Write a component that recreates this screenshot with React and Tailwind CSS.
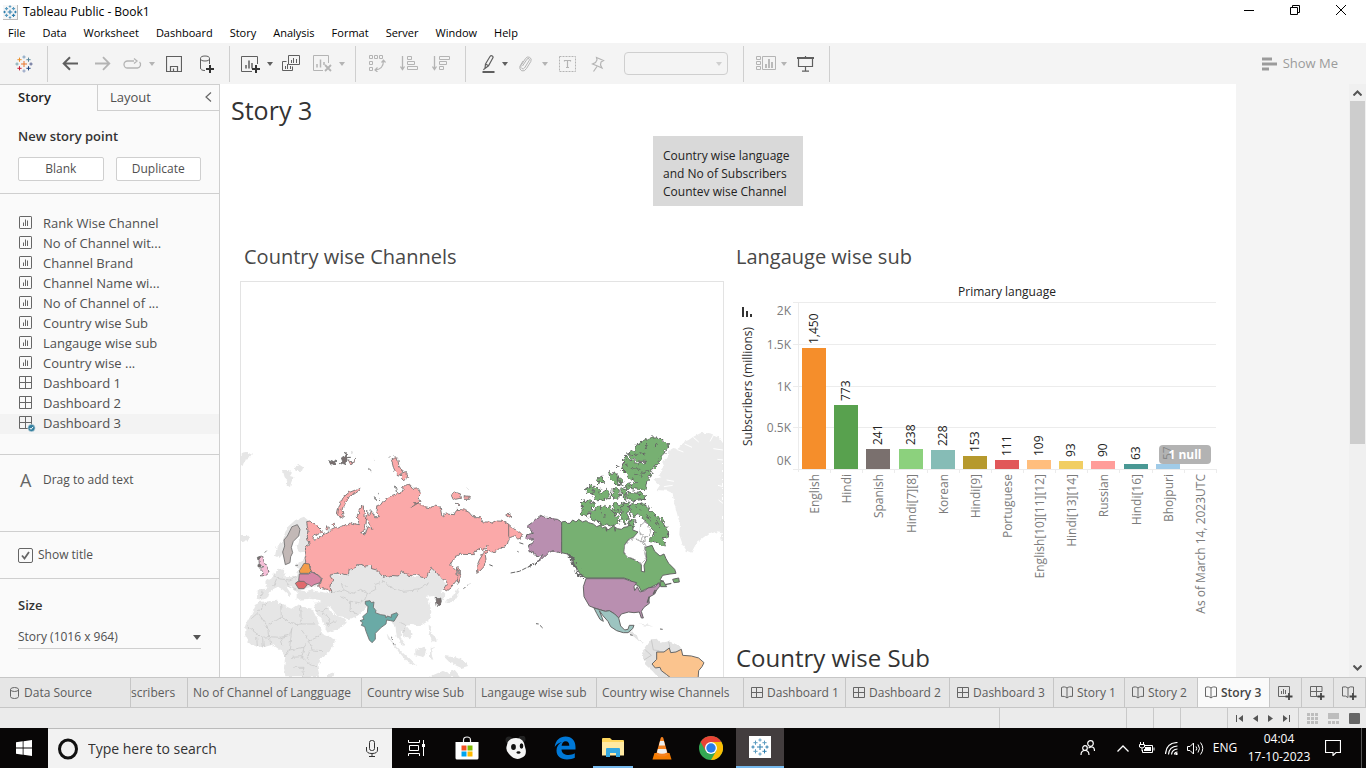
import React from "react";

const tone = "#666";

function Svg({ w, h = w, children, className = "", ...rest }) {
  return (
    <svg width={w} height={h} viewBox={`0 0 ${w} ${h}`} fill="none" stroke="currentColor" className={`shrink-0 ${className}`} aria-hidden="true" {...rest}>
      {children}
    </svg>
  );
}

function Caret({ className = "" }) {
  return (
    <Svg w={6} h={4} className={className}>
      <path d="M0 0H6L3 4Z" fill="currentColor" stroke="none" />
    </Svg>
  );
}

/* ---------- logos ---------- */
function plus(x, y, r) {
  return `M${x - r} ${y}H${x + r}M${x} ${y - r}V${y + r}`;
}

function TableauMark({ size, colors, width = 1 }) {
  const [c, n, ne, e, se, s, sw, w, nw] = colors;
  return (
    <svg width={size} height={size} viewBox="0 0 18 18" fill="none" strokeWidth={width} className="shrink-0" aria-hidden="true">
      <path d={plus(9, 9, 3)} stroke={c} />
      <path d={plus(9, 2, 1.6)} stroke={n} />
      <path d={plus(13.5, 4.7, 2.1)} stroke={ne} />
      <path d={plus(16, 9, 1.6)} stroke={e} />
      <path d={plus(13.5, 13.3, 2.1)} stroke={se} />
      <path d={plus(9, 16, 1.6)} stroke={s} />
      <path d={plus(4.5, 13.3, 2.1)} stroke={sw} />
      <path d={plus(2, 9, 1.6)} stroke={w} />
      <path d={plus(4.5, 4.7, 2.1)} stroke={nw} />
    </svg>
  );
}

const blueMark = ["#2f7fae", "#5b9cc0", "#5b9cc0", "#2f7fae", "#2f7fae", "#5b9cc0", "#5b9cc0", "#2f7fae", "#5b9cc0"];
const colorMark = ["#e8762d", "#7c9dbd", "#5b879b", "#5b6591", "#1f457e", "#8b9cc0", "#c72037", "#7ba6b0", "#eb912c"];

/* ---------- small sheet icons ---------- */
function SheetIcon() {
  return (
    <svg width="17" height="16" viewBox="0 0 17 16" fill="none" stroke={tone} aria-hidden="true" className="shrink-0">
      <rect x=".5" y=".5" width="12" height="12" rx=".6" />
      <path d="M4.5 6.5V10M6.5 3.5V10M8.5 4.5V10" />
    </svg>
  );
}

function GridIcon({ checked, h = 12 }) {
  return (
    <svg width="17" height="16" viewBox="0 0 17 16" fill="none" stroke={tone} aria-hidden="true" className="shrink-0">
      <path d={`M.5 .5H12.5V${h}.5H.5ZM.5 6.5H12.5M6.5 .5V${h}.5`} />
      {checked && (
        <g>
          <circle cx="12.5" cy="12" r="3.7" fill="#347f9f" stroke="#f4f4f4" strokeWidth=".6" />
          <path d="M10.8 12L12 13.3L14.2 10.8" stroke="#fff" />
        </g>
      )}
    </svg>
  );
}

function TabGridIcon() {
  return (
    <Svg w={12} h={12} className="text-[#666]">
      <path d="M.5 .5H11.5V10.5H.5ZM.5 5.5H11.5M5.5 .5V10.5" />
    </Svg>
  );
}

function BookIcon() {
  return (
    <Svg w={12} h={13} className="text-[#666]">
      <path d="M.5 1.5C2.5 .5 4.5 .8 6 2C7.5 .8 9.500 .5 11.500 1.500V10.500C9.500 10 7.500 10.500 6 12C4.500 10.500 2.500 10 .5 10.500ZM6 2V12" />
    </Svg>
  );
}

/* ---------- toolbar ---------- */
function ToolButton({ label, className = "w-8", disabled, children }) {
  return (
    <button type="button" aria-label={label} className={`flex h-8 shrink-0 items-center justify-center ${disabled ? "text-[#b4b4b4]" : "text-[#5f5f5f]"} ${className}`}>
      {children}
    </button>
  );
}

function Group({ className, children }) {
  return <div className={`my-1 flex h-9 shrink-0 items-center border-r border-[#cfcfcf] ${className}`}>{children}</div>;
}

function Toolbar() {
  return (
    <div role="toolbar" aria-label="Main" className="flex h-[41px] shrink-0 items-center bg-[#f4f4f4] font-['Open_Sans',sans-serif]">
      <Group className="w-12">
        <ToolButton label="Start page" className="w-12">
          <TableauMark size={18} colors={colorMark} width={1} />
        </ToolButton>
      </Group>
      <Group className="w-[182px] pl-1.5">
        <ToolButton label="Undo"><Svg w={17} h={15} strokeWidth="2"><path d="M1.500 7.500H16M8 1.200L1.700 7.500L8 13.800" /></Svg></ToolButton>
        <ToolButton label="Redo" disabled><Svg w={17} h={15} strokeWidth="1.800"><path d="M1 7.500H15.500M9 1.200L15.300 7.500L9 13.800" /></Svg></ToolButton>
        <ToolButton label="Replay" disabled className="w-7"><Svg w={19} h={12} strokeWidth="1.300"><path d="M11 3H4.500A3.500 3.500 0 0 0 4.500 10H14.500A3.500 3.500 0 0 0 16.500 4M11 .5L14 3L11 5.500" /></Svg></ToolButton>
        <ToolButton label="Replay options" disabled className="w-3"><Caret /></ToolButton>
        <ToolButton label="Save"><Svg w={16} h={16}><path d="M.5 .5H15.500V15.500H.5ZM4.500 15V10.500H11.500V15M7.500 12.500V15.500" strokeWidth="1.200" /></Svg></ToolButton>
        <ToolButton label="New data source"><Svg w={16} h={18}><ellipse cx="7" cy="3.500" rx="4.500" ry="2.500" /><path d="M2.500 3.500V13C2.500 14.500 4 15.500 7 15.500M11.500 3.500V9" /><path d="M8 14H16M12 10V18" stroke="#333" strokeWidth="2" /></Svg></ToolButton>
      </Group>
      <Group className="w-[126px] pl-1">
        <ToolButton label="New worksheet"><Svg w={19} h={18}><path d="M16.500 9V1.500H.5V16.500H11" /><path d="M5 10V13.500M8 5.500V13.500M11 8V13.500" strokeWidth="1.500" /><path d="M11 14H19M15 10V18" stroke="#333" strokeWidth="2" /></Svg></ToolButton>
        <ToolButton label="New worksheet options" className="w-2"><Caret /></ToolButton>
        <ToolButton label="Duplicate" className="w-[34px]"><Svg w={18} h={17}><path d="M6.500 .5H17.500V9.500H6.500ZM4.500 6.500H.5V15.500H10.500V11.500" /><path d="M9.500 5V8M11.500 3V8M14.500 4V8M3.500 11V14M5.500 9V14M8.500 11V14" /></Svg></ToolButton>
        <ToolButton label="Clear sheet" disabled className="w-7"><Svg w={19} h={17}><path d="M15.500 8V.5H.5V15.500H10" /><path d="M4 9V12.500M7.500 4.500V12.500M11 7V10" strokeWidth="1.500" /><path d="M12 10L18 16M18 10L12 16" strokeWidth="1.800" /></Svg></ToolButton>
        <ToolButton label="Clear options" disabled className="w-3"><Caret /></ToolButton>
      </Group>
      <Group className="w-[110px] pl-[5px]">
        <ToolButton label="Swap rows and columns" disabled><Svg w={17} h={17}><path d="M.5 .5H3.500V3.500H.5ZM5.500 .5H8.500V3.500H5.500ZM10.500 .5H13.500V3.500H10.500ZM.5 6.500H3.500V9.500H.5ZM.5 12.500H3.500V15.500H.5Z" /><path d="M6 15C11 15 14.500 12 14.500 5.500M12.500 7.500L14.500 5.200L16.500 7.500M8.500 12.500L6 15L8.500 17" strokeWidth="1.200" /></Svg></ToolButton>
        <ToolButton label="Sort ascending" disabled><Svg w={18} h={15}><path d="M2.500 0V13.500M.5 10.500L2.500 13.500L4.500 10.500" strokeWidth="1.300" /><path d="M7.500 .5H11.500V3.500H7.500ZM7.500 5.500H14.500V8.500H7.500ZM7.500 10.500H17.500V13.500H7.500Z" /></Svg></ToolButton>
        <ToolButton label="Sort descending" disabled><Svg w={18} h={15}><path d="M2.500 0V13.500M.5 10.500L2.500 13.500L4.500 10.500" strokeWidth="1.300" /><path d="M7.500 .5H17.500V3.500H7.500ZM7.500 5.500H14.500V8.500H7.500ZM7.500 10.500H11.500V13.500H7.500Z" /></Svg></ToolButton>
      </Group>
      <Group className="w-[278px] pl-2">
        <ToolButton label="Highlight" className="w-7"><Svg w={13} h={18}><path d="M3.500 9L8 1.500Q9 .2 10.300 1Q11.500 1.800 10.800 3L6.500 10.800L3 13.500ZM3.500 9L6.500 10.800M2.500 13.500L1.500 15" strokeWidth="1.200" /><path d="M.5 17H12.500" strokeWidth="2" /></Svg></ToolButton>
        <ToolButton label="Highlight options" className="w-1.5"><Caret /></ToolButton>
        <ToolButton label="Group members" disabled className="w-[34px]"><Svg w={13} h={16}><path d="M3.500 10L8 3.200Q9 2 10 2.700Q10.800 3.400 10.200 4.500L5.500 12Q4.500 13.500 3 12.600Q1 11.500 2 9.500L6.500 2.500Q8 .3 10.500 1.200Q13.200 2.800 11.800 5.500L7.500 12.500Q5.500 15.800 2.800 14.800Q.2 13.500 .8 10.500L4 5" /></Svg></ToolButton>
        <ToolButton label="Group options" disabled className="w-1.5"><Caret /></ToolButton>
        <ToolButton label="Show mark labels" disabled className="w-[38px]"><Svg w={17} h={16}><rect x=".5" y=".5" width="16" height="15" strokeDasharray="2 1" /><path d="M5.500 5.500V4.500H11.500V5.500M8.500 4.500V11.500M7 11.500H10" strokeWidth="1.200" /></Svg></ToolButton>
        <ToolButton label="Pin axes" disabled className="w-6"><Svg w={14} h={16}><path d="M5.500 1.500L12.500 4.500L10 6L9.500 9L11 12L6.500 10L1.500 8L4.500 6.500L6 4ZM6 10.500L2.500 15.500" strokeWidth="1.200" /></Svg></ToolButton>
        <span className="relative ml-3.5 flex items-center">
          <select aria-label="Fit" disabled className="h-[23px] w-[104px] appearance-none rounded-sm border border-[#cfcfcf] bg-[#f4f4f4]"><option></option></select>
          <Caret className="pointer-events-none absolute right-1.5 text-[#cfcfcf]" />
        </span>
      </Group>
      <Group className="w-[86px] pl-2">
        <ToolButton label="Cards" disabled className="w-7"><Svg w={20} h={15}><path d="M.5 .5H4.500V3.500H.5ZM.5 5.500H4.500V8.500H.5ZM.5 10.500H4.500V13.500H.5ZM6.500 .5H19.500V13.500H6.500Z" /><path d="M10 8V12M13 3V12M16 6V12" strokeWidth="1.800" /></Svg></ToolButton>
        <ToolButton label="Card options" disabled className="w-2"><Caret /></ToolButton>
        <ToolButton label="Presentation mode" className="w-9"><Svg w={18} h={16}><path d="M0 2H17" strokeWidth="2" /><path d="M1.500 2V10.500H15.500V2M8.500 0V2M8.500 10.500V15M5 15.200H12" strokeWidth="1.200" /></Svg></ToolButton>
      </Group>
      <button type="button" className="ml-auto mr-7 flex items-center gap-1.5 text-[13px] text-[#9b9b9b]">
        <Svg w={15} h={14} strokeWidth="3"><path d="M0 2H10M0 7H15M0 12H7" /></Svg>
        Show Me
      </button>
    </div>
  );
}

/* ---------- side panel ---------- */
const sheets = ["Rank Wise Channel", "No of Channel wit...", "Channel Brand", "Channel Name wi...", "No of Channel of ...", "Country wise Sub", "Langauge wise sub", "Country wise ..."];
const boards = ["Dashboard 1", "Dashboard 2", "Dashboard 3"];

function SidePanel() {
  return (
    <aside className="flex w-[220px] shrink-0 flex-col border-r border-t border-[#cfcfcf] bg-[#fafafa] font-['Open_Sans',sans-serif] text-[13px] text-[#505050]">
      <div className="flex h-[26px] shrink-0">
        <button type="button" className="w-[97px] pl-0 pr-7 text-center font-semibold text-[#222]">Story</button>
        <button type="button" className="flex flex-1 items-center justify-between border-b border-l border-[#cfcfcf] pl-3 pr-[7px]">
          Layout
          <Svg w={7} h={10} className="mb-0.5"><path d="M6 .5L1 5L6 9.500" stroke={tone} strokeWidth="1.200" /></Svg>
        </button>
      </div>
      <section className="border-b border-[#cfcfcf] px-[18px] pb-3 pt-[15px]">
        <h2 className="leading-5 font-semibold text-[#333]">New story point</h2>
        <div className="mt-[11px] flex gap-3 text-xs">
          <button type="button" className="h-6 flex-1 rounded-xs border border-[#cfcfcf] bg-white">Blank</button>
          <button type="button" className="h-6 flex-1 rounded-xs border border-[#cfcfcf] bg-white">Duplicate</button>
        </div>
      </section>
      <ul className="border-b border-[#cfcfcf] pb-5 pt-5">
        {sheets.map((s) => (
          <li key={s} className="flex h-5 items-center gap-[7px] pl-[19px]"><SheetIcon />{s}</li>
        ))}
        {boards.map((s, i) => (
          <li key={s} className={`flex h-5 items-center gap-[7px] pl-[19px] ${i === 2 ? "bg-[#f3f3f3]" : ""}`}><GridIcon checked={i === 2} />{s}</li>
        ))}
      </ul>
      <div className="flex h-[77px] shrink-0 items-start gap-3 border-b border-[#cfcfcf] pl-5 pt-[13px] text-xs">
        <span className="w-[11px] text-lg leading-6 text-[#666]">A</span>
        <span className="leading-6">Drag to add text</span>
      </div>
      <div className="flex h-[47px] shrink-0 items-center border-b border-[#cfcfcf] pl-[18px] text-xs">
        <label className="flex items-center gap-[5px]">
          <span className="relative flex">
            <input type="checkbox" defaultChecked className="peer h-[15px] w-[15px] appearance-none rounded-xs border border-[#666] bg-[#fafafa]" />
            <Svg w={15} h={15} className="pointer-events-none absolute hidden peer-checked:block"><path d="M4 7.500L6.500 10.500L11 4" stroke={tone} strokeWidth="1.800" /></Svg>
          </span>
          Show title
        </label>
      </div>
      <div className="flex flex-col px-[18px] pt-4">
        <label htmlFor="size" className="leading-5 font-semibold text-[#333]">Size</label>
        <div className="relative mt-2.5 flex items-center">
          <select id="size" className="h-6 w-full appearance-none border-b border-[#cfcfcf] bg-transparent text-xs"><option>Story (1016 x 964)</option></select>
          <Svg w={8} h={5} className="pointer-events-none absolute right-0 text-[#555]"><path d="M0 0H8L4 5Z" fill="currentColor" stroke="none" /></Svg>
        </div>
      </div>
    </aside>
  );
}

/* ---------- map ---------- */
function WorldMap() {
  return (
    <svg width="482" height="395" viewBox="241 282 482 395" aria-label="Country wise Channels map" role="img" className="block">
      <defs>
        <filter id="coast" x="-5%" y="-5%" width="110%" height="110%">
          <feTurbulence type="fractalNoise" baseFrequency=".09" numOctaves="2" seed="4" />
          <feDisplacementMap in="SourceGraphic" scale="22" xChannelSelector="R" yChannelSelector="G" />
        </filter>
        <filter id="coast-fine" x="-5%" y="-5%" width="110%" height="110%">
          <feTurbulence type="fractalNoise" baseFrequency=".08" numOctaves="2" seed="9" />
          <feDisplacementMap in="SourceGraphic" scale="12" xChannelSelector="R" yChannelSelector="G" />
        </filter>
      </defs>
      <g transform="translate(230 420) scale(.33333)" strokeLinejoin="round">
        <g fill="#e6e6e6" filter="url(#coast-fine)">
          <path d="M32 100L50 96L66 104L58 116L44 120L38 138L32 134ZM32 345L50 345L58 354L44 366L32 364Z" />
          <path d="M158 150L176 150L186 158L180 168L192 172L184 186L180 202L170 194L172 180L164 172ZM190 142L208 134L220 142L216 152L198 154Z" />
          <path d="M135 408L140 382L160 356L172 322L196 300L222 290L236 302L232 320L236 345L238 372L232 392L206 398L200 376L208 350L208 324L196 316L180 326L178 356L164 372L160 400L148 414Z" />
          <path d="M226 400L222 420L206 430L192 438L206 448L200 470L160 472L166 452L148 444L134 460L130 472L106 486L112 506L84 508L80 536L96 540L116 530L124 510L144 500L160 510L178 528L184 522L170 502L182 498L204 520L214 528L212 512L230 504L262 496L290 508L310 518L346 520L360 470L300 460L240 410Z" />
          <path d="M306 462L356 464L360 450L392 434L426 440L460 470L516 456L548 470L592 472L606 446L624 462L640 480L646 496L634 512L646 524L640 540L620 534L606 528L590 530L600 552L604 580L594 604L570 618L548 612L530 618L548 642L540 658L524 650L514 630L512 652L528 676L520 680L500 650L496 616L480 600L470 590L440 584L410 560L380 590L356 598L342 590L322 588L300 560L282 552L270 540L240 536L200 540L200 520L240 510L300 520Z" />
          <path d="M252 548L282 546L312 584L346 596L350 608L332 624L292 638L276 600L256 572Z" />
          <path d="M82 546L142 542L152 552L184 566L200 556L246 566L262 598L278 642L316 658L304 690L276 712L262 740L270 772L166 772L162 742L166 710L150 690L128 674L92 684L60 672L46 648L46 616L66 580Z" />
          <path d="M650 550L672 544L688 518L682 500L676 512L668 530L648 540ZM470 640L486 664L520 700L550 728L560 738L530 724L500 688L474 656ZM556 690L580 680L590 690L580 712L556 706ZM600 690L612 680L604 700L610 716L600 714ZM640 708L676 712L706 724L714 738L694 744L660 728ZM594 772L640 752L660 760L672 750L690 772Z" />
          <path d="M596 614L604 620L600 634L612 644L620 660L606 666L598 640Z" />
          <path d="M294 765L308 756L316 765L310 772H294Z" />
        </g>
        <g fill="none" stroke="#c4c4c4" strokeWidth="2" filter="url(#coast-fine)">
          <path d="M84 572L112 548M152 552L154 592L112 618L84 578M154 592L196 614L214 612L212 560M214 612H256M84 578L64 596M112 618L116 650L96 652L52 620M116 650L152 652L178 646L186 622M186 622L178 690L166 710M178 690L222 682L238 660L214 630M238 660L262 652L270 640M238 660L246 690L276 692M186 712L216 710L222 682M216 710L240 734L262 740M190 742H222L216 772M152 652L158 676M80 652L82 680M98 654L100 682M118 652L122 674M240 690L232 716" />
          <path d="M256 572L276 576L298 560M276 576L300 596L292 616L316 602M310 518L340 510L370 520L392 508L412 520L438 508L434 494L462 484M340 510L334 490L350 500M330 530L362 544L386 548L404 540M362 544L360 574L388 584M404 540L412 520M456 476L476 500L520 514L562 510L596 490M438 584L468 590M508 606L530 616L516 640M128 460L146 476L178 480L202 470M140 476L130 500M166 478L176 500L202 510M96 512L94 536" />
        </g>
        <g stroke="#6c6c6c" strokeWidth="2.500">
          <path fill="#fba9a9" filter="url(#coast-fine)" d="M230 305L240 303L262 316L276 330L276 340L262 344L252 340L248 350L256 360L268 354L275 352L278 345L295 336L304 328L316 322L325 324L340 316L352 318L360 308L375 312L388 314L382 290L388 270L398 258L404 270L402 286L410 296L408 314L404 332L392 338L406 342L414 320L426 328L416 306L410 298L410 274L420 284L424 272L434 290L448 290L438 278L446 270L436 258L452 254L462 240L478 230L492 224L506 220L520 214L518 202L530 192L542 196L552 208L566 206L571 220L564 232L570 246L540 264L552 252L568 248L580 260L606 264L612 255L630 258L636 290L648 282L674 284L680 268L700 270L716 276L728 290L752 290L760 306L778 306L788 310L802 303L822 304L838 314L850 326L866 334L878 344L866 360L854 348L838 352L836 362L832 376L816 380L804 392L786 396L774 390L766 405L768 418L762 440L748 455L740 460L740 440L748 420L760 400L772 385L774 376L758 392L752 384L740 390L730 404L690 403L675 413L662 435L670 446L680 450L682 470L676 486L665 500L650 512L640 508L648 495L652 482L635 478L622 460L605 445L597 455L590 472L575 472L555 462L545 468L530 464L515 455L505 468L480 466L460 472L440 450L425 446L424 436L406 438L390 433L375 443L358 448L355 465L330 460L305 460L300 468L308 480L302 490L300 500L306 517L290 508L270 505L262 498L272 490L275 475L265 465L245 458L242 440L228 430L225 415L230 395L226 384L238 376L232 350L234 330Z" />
          <path d="M836 313V350" />
          <path fill="#fba9a9" filter="url(#coast-fine)" d="M322 284L328 256L340 232L356 218L376 210L386 202L390 210L376 220L358 230L346 246L336 268L340 290L330 294ZM484 118L496 110L504 120L506 136L516 150L512 166L500 162L490 142ZM516 160L530 158L536 172L520 182L514 174ZM664 222L674 216L692 222L694 234L676 238L666 232ZM702 230L718 232L716 238L704 238ZM676 250L688 252L686 260ZM682 442L688 440L688 462L692 470L686 490L682 480L684 462ZM290 320L298 322L296 330L288 328ZM306 312L312 308L314 314L308 318ZM352 122L366 126L376 114L376 122L362 132ZM830 288L838 282L846 288L836 292Z" />
          <path fill="#7a6f6f" filter="url(#coast-fine)" d="M296 122L308 126L320 120L314 132L304 136ZM334 114L342 108L348 96L350 112L362 112L350 120L348 134L338 130L328 134L338 124ZM476 112L480 110M418 148L424 152M432 118L434 120M444 192L446 194M444 222L448 220M436 232V240M444 240L448 236M496 200L500 216M366 98L368 100M618 536L632 534L634 544L630 556L622 556ZM484 650L488 660M488 666L492 674M712 206L714 208M700 506L708 500M712 496L722 488" />
          <path fill="#c2b8b6" d="M186 320L202 314L210 328L206 348L190 364L184 382L188 398L182 410L180 428L166 434L162 414L158 396L164 378L162 360L172 348Z" />
          <path fill="#f49d4a" d="M208 452L216 440L222 430L238 432L240 446L244 452L236 460L210 460Z" />
          <path fill="#d887a5" d="M208 462L236 462L246 456L264 466L274 476L270 488L252 494L244 500L238 494L224 490L206 482Z" />
          <path fill="#e16a6d" d="M196 490L204 484L222 484L232 494L222 506L206 506Z" />
          <path fill="#f5bfd7" filter="url(#coast-fine)" d="M86 410L98 408L100 418L104 430L112 442L118 458L108 466L94 468L100 456L92 448L98 438L88 432Z" />
          <path fill="#7a6f6f" d="M82 412L92 412L84 420ZM84 434L92 434L92 442L84 440ZM196 436H204M104 398L110 392" />
          <path fill="#6aaaa6" d="M406 544L420 542L424 548L432 546L430 562L438 572L436 578L452 584L466 586L468 594L472 588L484 592L484 584L500 578L504 584L492 604L482 602L470 600L468 612L454 622L436 640L436 658L426 668L418 660L408 634L404 620L394 616L398 608L390 602L402 598L398 590L412 578L414 560L406 552Z" />
        </g>
      </g>
      <g transform="translate(480 420) scale(.33333)" strokeLinejoin="round">
        <g fill="#ebebeb" filter="url(#coast-fine)">
          <path d="M564 94L580 84L596 88L604 68L626 60L640 50L664 38L690 40L716 50L729 70V340L706 336L676 348L650 368L634 398L620 392L608 374L598 344L600 312L594 292L584 254L578 220L562 212L530 210L540 196L520 178L544 172L536 158L552 138L546 124L564 112Z" />
          <path fill="#e2e2e2" d="M486 700L498 682L514 658L530 656L540 668L566 664L588 672L606 686L604 772H534L518 754L498 736ZM446 630L470 644L476 660L494 668L480 666L462 650L446 642Z" />
          <path d="M474 610L500 612L520 620L500 618ZM720 345L729 342V366L722 360Z" />
        </g>
        <path d="M514 658L520 690L538 692M496 690L514 706L492 720M566 664L570 684" fill="none" stroke="#bdbdbd" strokeWidth="2" />
        <path d="M590 88L610 96M614 72L636 82M640 52L656 66M700 46L690 64M560 180L582 184M552 200L578 196M729 90L700 86M729 120L712 118M729 200L714 196M729 250L716 240" stroke="#fff" strokeWidth="3" fill="none" />
        <g stroke="#656565" strokeWidth="3">
          <path fill="#b98fb0" filter="url(#coast-fine)" d="M245 306L232 298L216 296L208 292L194 292L182 286L166 298L156 308L142 318L152 328L160 340L140 344L138 354L148 358L160 356L158 370L142 376L148 396L160 392L162 404L178 408L188 404L180 416L166 430L146 440L182 420L200 402L218 392L234 396L245 400Z" />
          <path fill="none" d="M92 459L118 454L138 444L160 434" strokeDasharray="14 4" />
          <path fill="#77b072" d="M245 306L256 304L262 310L270 310L278 300L288 306L296 298L308 306L318 302L326 308L340 312L350 320L360 316L368 324L376 320L384 330L400 318L412 326L424 328L432 322L444 320L450 302L462 312L458 330L474 336L460 352L446 358L434 374L432 400L450 414L470 422L484 434L484 454L494 456L492 436L500 420L498 400L496 382L516 376L524 394L540 408L552 402L558 416L566 430L584 448L588 460L570 462L548 466L540 480L552 484L540 492L528 494L512 502L496 508L484 514L476 498L460 490L450 480L432 474H318L302 464L292 448L282 432L276 416L262 402L245 398Z" />
          <g filter="url(#coast)">
            <path fill="#77b072" d="M444 100L460 92L470 78L490 60L510 54L530 54L550 62L568 76L556 92L546 112L536 124L530 138L514 152L510 172L500 186L496 208L476 208L456 206L458 194L468 186L450 176L438 162L426 150L428 126L438 108L450 118L464 128L488 132L500 124L480 124L458 118Z" />
            <path fill="#77b072" d="M440 222L460 218L492 222L494 238L466 242L442 238ZM308 244L326 240L346 252L336 268L320 288L306 280ZM334 276L350 262L372 262L386 254L396 272L410 290L420 308L398 318L368 314L344 302L328 292ZM398 254L414 248L426 256L420 282L402 280ZM428 252L446 246L450 262L442 280L448 298L434 314L422 298L426 274ZM452 252L480 250L500 258L514 274L530 286L548 304L564 328L566 348L550 354L558 382L540 374L524 364L508 366L510 350L526 340L516 322L498 310L488 292L474 284L460 290L450 274ZM336 216L356 202L366 218L382 208L390 230L370 238L356 242L342 230ZM316 216L330 194L346 200L334 222ZM384 154L396 158L412 164L414 182L424 190L408 192L392 176ZM350 178L366 168L372 186L354 194ZM412 168L430 178L426 194L412 184ZM396 208L414 202L420 218L416 238L398 232ZM422 204L436 204L438 238L426 232ZM440 190L452 188L454 206L440 204ZM452 298L466 300L462 320L446 312ZM408 140L416 138" />
            <path d="M460 104L484 98L500 104M500 72L496 88M530 66L526 84M440 134L456 146L478 148M500 150L484 166L466 160M470 262L480 272M500 282L512 304M524 300L536 318M360 278L376 290M404 264L412 272M356 216L362 230" fill="none" />
          </g>
          <g filter="url(#coast)">
            <path d="M262 404L276 418L274 430L290 446L294 460L312 474M268 402L284 420M280 428L296 448" fill="none" strokeWidth="5" />
          </g>
          <path fill="#fff" filter="url(#coast-fine)" d="M482 316L494 306L504 312L512 334L506 350L492 350L496 364L482 366L490 346L480 340ZM446 360L464 356L482 364L498 376L494 400L500 420L484 432L462 418L446 412L432 396L434 376Z" stroke="#858585" strokeWidth="2" />
          <path d="M378 322L380 334M404 322L406 334M532 490L546 498L556 494L574 490" fill="none" strokeWidth="4" />
          <path fill="#77b072" d="M578 478L596 474L598 486L582 488ZM540 486L550 484L560 500L542 500Z" />
          <path fill="#b98fb0" d="M318 476H432L448 482L470 488L462 500L464 512L472 500L480 516L494 512L504 504L526 500L536 488L540 498L530 510L524 522L506 532L508 550L492 562L484 574L490 594L484 594L478 576L462 578L446 576L424 582L416 594L404 582L388 572L376 574L344 564L328 558L312 530L310 500Z" />
          <path d="M508 530L502 548M526 510L520 522" strokeWidth="5" />
          <path fill="#9dc4c0" d="M342 564L376 574L388 572L404 582L416 594L422 618L434 630L444 628L448 616L462 616L458 626L444 638L430 638L410 632L392 620L384 604L368 586L358 572L366 592L370 604L360 598L350 580Z" />
          <path fill="#fbc48e" d="M516 732L530 718L530 696L552 696L568 684L572 698L588 696L604 688L608 706L634 708L656 714L672 728L666 740L656 752L654 780H580L560 764L544 752L540 742L526 744Z" />
          <path fill="none" d="M168 611L176 612M180 616L188 624M540 627L548 628M450 644L458 646M118 368L130 372M112 394L116 396M28 434L38 438" />
        </g>
      </g>
    </svg>
  );
}

/* ---------- bar chart ---------- */
const bars = [
  ["English", "1,450", 1450, 802, "#f58e2b"],
  ["Hindi", "773", 773, 834, "#58a14e"],
  ["Spanish", "241", 241, 866, "#7a706e"],
  ["Hindi[7][8]", "238", 238, 899, "#8cd17d"],
  ["Korean", "228", 228, 931, "#86bcb6"],
  ["Hindi[9]", "153", 153, 963, "#b6992d"],
  ["Portuguese", "111", 111, 995, "#e15759"],
  ["English[10][11][12]", "109", 109, 1027, "#ffbe7d"],
  ["Hindi[13][14]", "93", 93, 1059, "#f1ce63"],
  ["Russian", "90", 90, 1091, "#ff9d9a"],
  ["Hindi[16]", "63", 63, 1124, "#499894"],
  ["Bhojpuri", "57", 57, 1156, "#a0cbe8"],
  ["As of March 14, 2023UTC", "", 0, 1188, "#fff"],
];
const ticks = [["2K", 315], ["1.5K", 349], ["1K", 391], ["0.5K", 432], ["0K", 465]];

function BarChart() {
  return (
    <svg width="484" height="342" viewBox="736 282 484 342" role="img" aria-label="Subscribers by primary language" className="block font-['Open_Sans',sans-serif] text-xs">
      <text x="1007" y="296" textAnchor="middle" fill="#222">Primary language</text>
      <path d="M793 302.500H1216M793 344.500H1216M793 386.500H1216M793 427.500H1216M793 469.500H1216M798.500 302V472" stroke="#ececec" fill="none" />
      <path d="M743 307V317M747 311V317M751 314V317" stroke="#333" strokeWidth="2" />
      <text transform="translate(752 446) rotate(-90)" fill="#333">Subscribers (millions)</text>
      {ticks.map(([t, y]) => (
        <text key={t} x="791" y={y} textAnchor="end" fill="#7b7b7b">{t}</text>
      ))}
      {bars.map(([name, label, v, x, color]) => {
        const h = Math.round(v / 12);
        return (
          <g key={name}>
            <rect x={x} y={469 - h} width="24" height={h} fill={color} />
            <path d={`M${x + 28}.500 469V473`} stroke="#ececec" />
            <text transform={`translate(${x + 16} ${465 - h}) rotate(-90)`} fill="#222">{label}</text>
            <text transform={`translate(${x + 17} 474) rotate(-90)`} textAnchor="end" fill="#7b7b7b">{name}</text>
          </g>
        );
      })}
    </svg>
  );
}

function Story() {
  return (
    <main className="flex min-w-0 flex-1 overflow-hidden bg-[#f4f4f4] font-['Open_Sans',sans-serif] text-[#333]">
      <div className="w-[1016px] shrink-0 overflow-hidden bg-white">
        <h1 className="pl-[11px] pt-2 text-[25px] leading-9">Story 3</h1>
        <div className="mx-auto mt-2 h-[70px] w-[150px] bg-[#d9d9d9] px-2.5 pt-[11px]">
          <p className="h-[49px] overflow-hidden whitespace-nowrap text-xs leading-[18px] text-[#222]">Country wise language<br />and No of Subscribers<br />Countey wise Channel</p>
        </div>
        <div className="mt-9 grid grid-cols-[484px_484px] gap-x-3 pl-5">
          <section>
            <h2 className="pl-1 text-xl leading-[30px] text-[#484848]">Country wise Channels</h2>
            <div className="mt-[9px] border border-[#e3e3e3]"><WorldMap /></div>
          </section>
          <section>
            <h2 className="text-xl leading-[30px] text-[#484848]">Langauge wise sub</h2>
            <div className="relative mt-2.5">
              <BarChart />
              <button type="button" className="absolute right-[9px] top-[163px] h-[19px] w-[52px] rounded-sm bg-[#a0a0a0]/80 text-xs leading-[19px] font-bold text-white">1 null</button>
            </div>
            <h2 className="mt-4 text-2xl leading-9">Country wise Sub</h2>
          </section>
        </div>
      </div>
      <div className="ml-auto flex w-[17px] shrink-0 flex-col items-center justify-between bg-[#f0f0f0] py-1.5">
        <Svg w={9} h={6} strokeWidth="2"><path d="M.5 5.500L4.500 1.500L8.500 5.500" stroke="#555" /></Svg>
        <div className="mb-auto mt-[5px] h-[343px] w-[15px] bg-[#cdcdcd]" />
        <Svg w={9} h={6} strokeWidth="2"><path d="M.5 .5L4.500 4.500L8.500 .5" stroke="#555" /></Svg>
      </div>
    </main>
  );
}

/* ---------- bottom tabs ---------- */
function Tab({ className, active, children }) {
  return (
    <button type="button" className={`flex shrink-0 items-center gap-1 overflow-hidden whitespace-nowrap border-r border-[#c6c6c6] ${active ? "bg-[#fafafa] font-semibold text-[#444]" : "text-[#5c5c5c]"} ${className}`}>{children}</button>
  );
}

function SheetTabs() {
  return (
    <nav className="flex h-[31px] shrink-0 border-y border-[#c6c6c6] bg-[#e6e6e6] font-['Open_Sans',sans-serif] text-xs">
      <Tab className="w-[131px] pl-2.5">
        <Svg w={9} h={12} className="mr-px text-[#666]"><ellipse cx="4.500" cy="2.500" rx="4" ry="2" /><path d="M.5 2.500V9.500Q.5 11.500 4.500 11.500T8.500 9.500V2.500" /></Svg>
        Data Source
      </Tab>
      <Tab className="w-[57px]">scribers</Tab>
      <Tab className="w-[174px] pl-[5px]">No of Channel of Langguage</Tab>
      <Tab className="w-[114px] pl-[5px]">Country wise Sub</Tab>
      <Tab className="w-[121px] pl-[5px]">Langauge wise sub</Tab>
      <Tab className="w-[147px] pl-[5px]">Country wise Channels</Tab>
      <Tab className="w-[102px] pl-[7px]"><TabGridIcon />Dashboard 1</Tab>
      <Tab className="w-[104px] pl-[7px]"><TabGridIcon />Dashboard 2</Tab>
      <Tab className="w-[104px] pl-[7px]"><TabGridIcon />Dashboard 3</Tab>
      <Tab className="w-[71px] pl-[7px]"><BookIcon />Story 1</Tab>
      <Tab className="w-[73px] pl-[7px]"><BookIcon />Story 2</Tab>
      <Tab className="w-[72px] pl-[7px]" active><BookIcon />Story 3</Tab>
      <Tab className="w-8 justify-center"><Svg w={15} h={14} className="text-[#666]"><title>New worksheet</title><path d="M11.500 7V.5H.5V10.500H8M3.500 5V8M5.500 3V8M7.500 4V8" /><path d="M7.500 10.500H14.500M11 7V14" strokeWidth="1.800" stroke="#444" /></Svg></Tab>
      <Tab className="w-8 justify-center"><Svg w={15} h={14} className="text-[#666]"><title>New dashboard</title><path d="M12 5.500V.5H.5V10.500H8M.5 5.500H12M6.500 .5V10.500" /><path d="M7.500 10.500H14.500M11 7V14" strokeWidth="1.800" stroke="#444" /></Svg></Tab>
      <Tab className="w-8 justify-center"><Svg w={15} h={14} className="text-[#666]"><title>New story</title><path d="M.5 1Q4 .2 6 2Q8 .2 11.500 1V7M.5 1V10Q4 9.500 6 11.500V2" /><path d="M7.500 10.500H14.500M11 7V14" strokeWidth="1.800" stroke="#444" /></Svg></Tab>
    </nav>
  );
}

function StatusBar() {
  const cell = "shrink-0 border-l border-[#c9c9c9]";
  return (
    <div className="flex h-5 shrink-0 justify-end bg-[#ebebeb]">
      <div className={`w-[127px] ${cell}`} />
      <div className={`w-[27px] ${cell}`} />
      <div className={`w-[27px] ${cell}`} />
      <div className={`w-[47px] ${cell}`} />
      <div className={`flex w-[71px] items-center justify-between px-2 text-[#555] ${cell}`}>
        <button type="button" aria-label="First"><Svg w={7} h={7}><path d="M.5 0V7" /><path d="M7 0V7L2.500 3.500Z" fill="currentColor" stroke="none" /></Svg></button>
        <button type="button" aria-label="Previous"><Svg w={5} h={7}><path d="M5 0V7L0 3.500Z" fill="currentColor" stroke="none" /></Svg></button>
        <button type="button" aria-label="Next"><Svg w={5} h={7}><path d="M0 0V7L5 3.500Z" fill="currentColor" stroke="none" /></Svg></button>
        <button type="button" aria-label="Last"><Svg w={7} h={7}><path d="M6.500 0V7" /><path d="M0 0V7L4.500 3.500Z" fill="currentColor" stroke="none" /></Svg></button>
      </div>
      <div className={`flex w-[68px] items-center gap-2.5 pl-2 ${cell}`}>
        <button type="button" aria-label="Show tabs"><Svg w={11} h={11}><path d="M0 1.500H11M0 5.500H11M0 9.500H11" stroke="#bdbdbd" strokeWidth="3" strokeDasharray="3 1" /></Svg></button>
        <button type="button" aria-label="Show filmstrip"><Svg w={11} h={11}><path d="M0 0H11V6H0ZM0 8H3V11H0ZM4 8H7V11H4ZM8 8H11V11H8Z" fill="#bdbdbd" stroke="none" /></Svg></button>
        <button type="button" aria-label="Show sheet sorter"><Svg w={11} h={11}><rect width="11" height="11" rx="1" fill="#666" stroke="none" /></Svg></button>
      </div>
    </div>
  );
}

/* ---------- taskbar ---------- */
function TaskButton({ label, className = "w-[49px]", children }) {
  return <button type="button" aria-label={label} className={`flex h-full shrink-0 items-center justify-center text-white ${className}`}>{children}</button>;
}

function Taskbar() {
  return (
    <footer className="flex h-10 shrink-0 items-center bg-[#080606] font-['Open_Sans',sans-serif] text-white">
      <TaskButton label="Start" className="w-12">
        <Svg w={16} h={16} stroke="none"><path fill="#fff" d="M0 2.300L6.700 1.300V7.600H0ZM7.500 1.200L16 0V7.600H7.500ZM0 8.400H6.700V14.700L0 13.700ZM7.500 8.400H16V16L7.500 14.800Z" /></Svg>
      </TaskButton>
      <label className="flex h-full w-[344px] shrink-0 items-center border-t border-[#bbb] bg-[#f2f2f2] pl-2.5 pr-3.5">
        <Svg w={20} h={22}><ellipse cx="10" cy="11" rx="8.500" ry="9" stroke="#111" strokeWidth="3" /></Svg>
        <input aria-label="Search" placeholder="Type here to search" className="ml-2.5 min-w-0 flex-1 bg-transparent text-sm text-[#333] outline-none placeholder:text-[#333]" />
        <Svg w={12} h={17} className="text-[#333]"><rect x="3.500" y=".5" width="5" height="10" rx="2" /><path d="M.5 7V10Q.5 13.500 6 13.500T11.500 10V7M6 13.500V16.500M3 16.500H9" /></Svg>
      </label>
      <TaskButton label="Task view"><Svg w={17} h={16}><path d="M.5 0V2.500H11.500V0M1.500 5.500H10.500V10.500H1.500ZM.5 16V13.500H11.500V16M15.500 0V16" /><path d="M14 5.500H17" strokeWidth="3" /></Svg></TaskButton>
      <TaskButton label="Store" className="w-[51px]">
        <Svg w={24} h={24} stroke="none"><path d="M8.500 7V4Q8.500 1 12 1T15.500 4V7" fill="none" stroke="#eee" strokeWidth="1.200" /><path d="M.5 6H23.500V22Q23.500 23.500 22 23.500H2Q.5 23.500 .5 22Z" fill="#fff" /><path d="M6.500 9.500H11.500V14.500H6.500Z" fill="#f25022" /><path d="M12.500 9.500H17.500V14.500H12.500Z" fill="#7fba00" /><path d="M6.500 15.500H11.500V20.500H6.500Z" fill="#00a4ef" /><path d="M12.500 15.500H17.500V20.500H12.500Z" fill="#ffb900" /></Svg>
      </TaskButton>
      <TaskButton label="Panda" className="w-12">
        <Svg w={22} h={24} stroke="none"><circle cx="4" cy="4" r="3.500" fill="#222" /><circle cx="17" cy="3" r="3.500" fill="#222" /><path d="M2 9Q3 2 11 2Q19 2 20 11Q23 20 16 22Q10 25 4 18Q0 14 2 9Z" fill="#f5f5f5" /><ellipse cx="8.500" cy="11" rx="2.400" ry="3" fill="#111" /><ellipse cx="16.500" cy="10" rx="1.800" ry="2.800" fill="#111" /><ellipse cx="13.500" cy="16.500" rx="2" ry="1.300" fill="#111" /></Svg>
      </TaskButton>
      <TaskButton label="Edge">
        <Svg w={22} h={24} stroke="none"><path fill="#0078d7" d="M.7 11C1.500 4 6 .5 11.500 .5C18 .5 21.500 5 21.500 11V13.500H7.500C7.700 17.500 11 19 14.500 19C17 19 19 18.300 20.800 17.300V21.800C18.500 23 16 23.500 13 23.500C6.500 23.500 2.500 20 2.500 14.500C2.500 10.500 4.500 7.800 8 6C5 6.500 2.300 8.500 .7 11ZM7.600 9.700H15.300C15.300 7 14 5.300 11.700 5.300C9.400 5.300 7.900 7.200 7.600 9.700Z" /></Svg>
      </TaskButton>
      <TaskButton label="File Explorer" className="ml-1 mr-1 w-10 border-b-2 border-[#76b9ed]">
        <Svg w={22} h={19} stroke="none"><path d="M0 1Q0 0 1 0H8L10 2H21Q22 2 22 3V17H0Z" fill="#ffd75e" /><path d="M0 4H22V17.500H0Z" fill="#ffe9a2" /><path d="M4 19V11Q4 10 5 10H17Q18 10 18 11V19H14V15H8V19Z" fill="#35a8e0" /></Svg>
      </TaskButton>
      <TaskButton label="VLC">
        <Svg w={20} h={23} stroke="none"><path d="M2.500 16H17.500L19.500 22.500H.5Z" fill="#f57c00" /><path d="M10 0Q11 0 11.300 1L16 18Q10 21 4 18L8.700 1Q9 0 10 0Z" fill="#f58220" /><path d="M8.100 4H11.900L13.100 8.500H6.900ZM5.900 12H14.100L15.100 15.500Q10 18 4.900 15.500Z" fill="#eee" /></Svg>
      </TaskButton>
      <TaskButton label="Chrome" className="w-[50px]">
        <Svg w={24} h={24} stroke="none"><circle cx="12" cy="12" r="12" fill="#34a853" /><path d="M12 0A12 12 0 0 1 22.400 6H12L6.800 15L1.600 6A12 12 0 0 1 12 0Z" fill="#ea4335" /><path d="M22.400 6A12 12 0 0 1 12 24L17.200 15L17.200 9L12 6Z" fill="#fbbc04" /><circle cx="12" cy="12" r="6" fill="#fff" /><circle cx="12" cy="12" r="4.700" fill="#2b7de9" /></Svg>
      </TaskButton>
      <TaskButton label="Tableau Public" className="w-12 border-b-2 border-[#76b9ed] bg-[#433d3e]">
        <span className="bg-white p-0.5"><TableauMark size={18} colors={blueMark} /></span>
      </TaskButton>
      <div className="ml-auto flex h-full items-center">
        <TaskButton label="People" className="w-7"><Svg w={15} h={16} strokeWidth="1.200"><circle cx="10.500" cy="3.500" r="2.800" /><circle cx="5" cy="8" r="2.300" /><path d="M1 15Q1 10.500 5 10.500T9 15M8.500 8Q14.500 5 14.500 11" /></Svg></TaskButton>
        <TaskButton label="Show hidden icons" className="ml-2.5 w-6"><Svg w={12} h={7} strokeWidth="1.300"><path d="M.5 6.500L6 1L11.500 6.500" /></Svg></TaskButton>
        <TaskButton label="Battery" className="w-6"><Svg w={16} h={12}><path d="M5.500 3.500H13.500V10.500H3.500V8M15 5.500V8.500" /><path d="M6 5H12V9H5V7H6Z" fill="#fff" stroke="none" /><path d="M1.500 0V2M4.500 0V2M.5 2.500H5.500V5Q3 7 .5 5ZM3 6V9" /></Svg></TaskButton>
        <TaskButton label="Network" className="w-6"><Svg w={13} h={13}><path d="M.5 12Q1 1 12.500 .5M3.500 12.500Q4 4.500 12.500 4M6.500 12.500Q7 7.500 12.500 7M9.500 12.500Q9.500 10 12.500 10" strokeWidth="1.200" /><circle cx="11.500" cy="12" r="1.200" fill="#fff" stroke="none" /></Svg></TaskButton>
        <TaskButton label="Volume" className="w-6"><Svg w={17} h={13}><path d="M.5 4.500H3L6.500 1V12L3 8.500H.5ZM9 4.500Q10.500 6.500 9 8.500M11 2.500Q14 6.500 11 10.500M13.500 .5Q18 6.500 13.500 12.500" /></Svg></TaskButton>
        <button type="button" className="w-9 text-center text-xs">ENG</button>
        <div className="w-[72px] text-center text-xs leading-[18px]"><div>04:04</div><div>17-10-2023</div></div>
        <TaskButton label="Notifications" className="w-9"><Svg w={16} h={16}><path d="M.5 .5H15.500V12.500H11L8 15.500V12.500H.5Z" strokeWidth="1.200" /></Svg></TaskButton>
        <div className="ml-2.5 h-full w-[5px] border-l border-[#555]" />
      </div>
    </footer>
  );
}

/* ---------- page ---------- */
const menu = ["File", "Data", "Worksheet", "Dashboard", "Story", "Analysis", "Format", "Server", "Window", "Help"];

export default function App() {
  return (
    <div className="flex h-screen flex-col overflow-hidden bg-white">
      <header className="shrink-0 font-['Open_Sans',sans-serif] text-[11px] text-black">
        <div className="flex h-6 items-center pl-[3px]">
          <span className="border-b border-r border-[#bbb] bg-[#f6f6f6]"><TableauMark size={14} colors={blueMark} width={1.400} /></span>
          <span className="ml-[5px] text-xs">Tableau Public - Book1</span>
          <div className="ml-auto mr-5 flex items-center gap-9 pb-1">
            <button type="button" aria-label="Minimize" className="w-2.5"><Svg w={10} h={10}><path d="M0 5.500H10" /></Svg></button>
            <button type="button" aria-label="Restore" className="w-2.5"><Svg w={10} h={10}><path d="M.5 2.500H7.500V9.500H.5ZM2.500 2.500V.5H9.500V7.500H7.500" /></Svg></button>
            <button type="button" aria-label="Close" className="w-2.5"><Svg w={10} h={10}><path d="M0 0L10 10M10 0L0 10" /></Svg></button>
          </div>
        </div>
        <nav className="flex h-[19px] items-center gap-[17px] pl-2">
          {menu.map((m) => <button type="button" key={m}>{m}</button>)}
        </nav>
      </header>
      <Toolbar />
      <div className="flex min-h-0 flex-1">
        <SidePanel />
        <Story />
      </div>
      <SheetTabs />
      <StatusBar />
      <Taskbar />
    </div>
  );
}
